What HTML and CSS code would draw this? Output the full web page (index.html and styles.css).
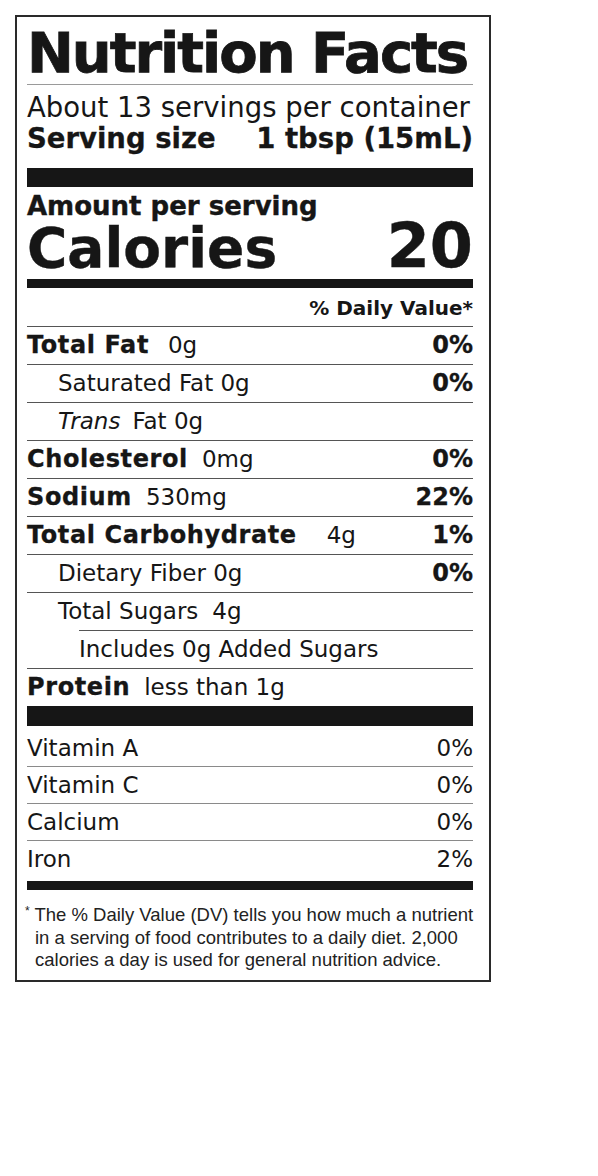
FILE: index.html
```html
<!doctype html>
<html>
    <head>
        <meta charset="utf-8" />
        <title>Nutrition Facts</title>
        <link rel="stylesheet" href="styles.css">
    </head>
    <body>
        <section class="label">
            <h1 class="label-title">Nutrition Facts</h1>

            <!-- Servings -->
            <div class="servings">
                <p class="servings-count">About 13 servings per container</p>
                <p class="serving-size"><span>Serving size</span><span>1 tbsp (15mL)</span></p>
            </div>

            <div class="bar bar-thick"></div>

            <!-- Calories -->
            <div class="calories">
                <p class="calories-amount">Amount per serving</p>
                <p class="calories-row"><span>Calories</span><span class="calories-value">20</span></p>
            </div>

            <div class="bar bar-medium"></div>

            <p class="dv-head">% Daily Value*</p>

            <ul class="facts">
                <li class="fact"><span><b>Total Fat</b><span class="amt amt-fat">0g</span></span><b class="dv">0%</b></li>
                <li class="fact indent"><span>Saturated Fat 0g</span><b class="dv">0%</b></li>
                <li class="fact indent"><span><i class="trans">Trans</i>Fat 0g</span></li>
                <li class="fact"><span><b>Cholesterol</b><span class="amt">0mg</span></span><b class="dv">0%</b></li>
                <li class="fact"><span><b>Sodium</b><span class="amt">530mg</span></span><b class="dv">22%</b></li>
                <li class="fact"><span><b>Total Carbohydrate</b><span class="amt amt-wide">4g</span></span><b class="dv">1%</b></li>
                <li class="fact indent"><span>Dietary Fiber 0g</span><b class="dv">0%</b></li>
                <li class="fact indent"><span>Total Sugars<span class="amt">4g</span></span></li>
                <li class="fact sub-indent"><span>Includes 0g Added Sugars</span></li>
                <li class="fact"><span><b>Protein</b><span class="amt">less than 1g</span></span></li>
            </ul>

            <div class="bar bar-heavy"></div>

            <ul class="vitamins">
                <li class="vitamin"><span>Vitamin A</span><span>0%</span></li>
                <li class="vitamin"><span>Vitamin C</span><span>0%</span></li>
                <li class="vitamin"><span>Calcium</span><span>0%</span></li>
                <li class="vitamin"><span>Iron</span><span>2%</span></li>
            </ul>

            <div class="bar bar-medium"></div>

            <p class="footnote">
                <sup>*</sup> The % Daily Value (DV) tells you how much a nutrient<br>
                in a serving of food contributes to a daily diet. 2,000<br>
                calories a day is used for general nutrition advice.
            </p>
        </section>
    </body>
</html>
```

FILE: styles.css
```css
body {
    margin: 0;
    background: #fff;
    color: #161616;
    font-family: "DejaVu Sans", sans-serif;
}

p {
    margin: 0;
}

.label {
    box-sizing: border-box;
    width: 476px;
    margin: 15px 0 0 15px;
    padding: 8px 16px 8px 10px;
    border: 2px solid #2a2a2a;
}

.label-title {
    margin: 0;
    padding-bottom: 3px;
    border-bottom: 1px solid #9a9a9a;
    font-size: 56px;
    line-height: 56px;
    font-weight: bold;
    letter-spacing: -2px;
    -webkit-text-stroke: 0.8px #161616;
}

.servings {
    padding: 7px 0 14px;
    font-size: 27.5px;
    line-height: 31px;
}

.serving-size {
    display: flex;
    justify-content: space-between;
    font-weight: bold;
    -webkit-text-stroke: 0.3px #161616;
}

.bar {
    background: #161616;
}

.bar-thick {
    height: 19px;
}

.bar-heavy {
    height: 20px;
}

.bar-medium {
    height: 9px;
}

.calories {
    padding: 6px 0 3px;
    font-weight: bold;
    -webkit-text-stroke: 0.4px #161616;
}

.calories-amount {
    font-size: 26px;
    line-height: 26px;
}

.calories-row {
    display: flex;
    justify-content: space-between;
    align-items: baseline;
    margin-top: 1px;
    font-size: 55px;
    line-height: 56px;
}

.calories-value {
    font-size: 62px;
    line-height: 51px;
}

.dv-head {
    padding: 7px 0 5px;
    text-align: right;
    font-size: 20px;
    line-height: 26px;
    font-weight: bold;
}

.facts,
.vitamins {
    margin: 0;
    padding: 0;
    list-style: none;
}

.fact {
    display: flex;
    justify-content: space-between;
    align-items: baseline;
    border-top: 1px solid #555;
    font-size: 23px;
    line-height: 37px;
}

.fact b {
    font-size: 24px;
    letter-spacing: 0.6px;
    -webkit-text-stroke: 0.3px #161616;
}

.fact .dv {
    letter-spacing: 0;
}

.indent {
    padding-left: 31px;
}

.sub-indent {
    margin-left: 52px;
}

.amt {
    margin-left: 14px;
}

.amt-fat {
    margin-left: 19px;
}

.amt-wide {
    margin-left: 30px;
}

.trans {
    margin-right: 12px;
}

.vitamins {
    padding: 4px 0;
}

.vitamin {
    display: flex;
    justify-content: space-between;
    font-size: 23px;
    line-height: 36px;
    border-bottom: 1px solid #8a8a8a;
}

.vitamin:last-child {
    border-bottom: none;
}

.footnote {
    padding: 10px 0 0 8px;
    text-indent: -10px;
    white-space: nowrap;
    font-family: "Liberation Sans", Arial, sans-serif;
    font-size: 18.5px;
    line-height: 22.5px;
    color: #222;
}

.footnote sup {
    font-size: 12px;
    vertical-align: 6px;
}
```
